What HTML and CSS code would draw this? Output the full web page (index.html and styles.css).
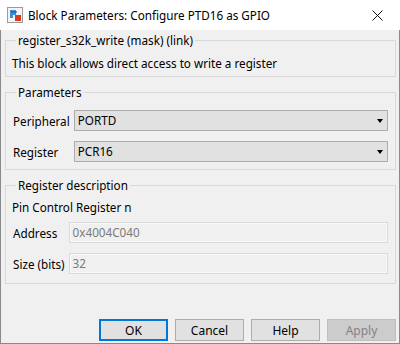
FILE: index.html
```html
<!DOCTYPE html>
<html lang="en">
<head>
    <meta charset="UTF-8">
    <title>Block Parameters: Configure PTD16 as GPIO</title>
    <link rel="stylesheet" href="styles.css">
</head>
<body>

    <div class="window">
        <div class="titlebar">
            <svg class="app-icon" width="16" height="16" viewBox="0 0 16 16">
                <rect x="0.5" y="0.5" width="15" height="15" fill="#f4f4f4" stroke="#9a9a9a"/>
                <path d="M3 3 L9 3 L9 8 L6 8 L6 11 L3 11 Z" fill="#3b8fd6"/>
                <path d="M4 5 L10 5" stroke="#1b5fa8" stroke-width="1.2"/>
                <rect x="8" y="8" width="6" height="6" fill="#d9391c"/>
            </svg>
            <span class="title">Block Parameters: Configure PTD16 as GPIO</span>
            <span class="close">
                <svg width="11" height="11" viewBox="0 0 11 11">
                    <path d="M0.5 0.5 L10.5 10.5 M10.5 0.5 L0.5 10.5" stroke="#111" stroke-width="1"/>
                </svg>
            </span>
        </div>

        <div class="content">
            <fieldset class="group intro">
                <legend>register_s32k_write (mask) (link)</legend>
                <div class="text">This block allows direct access to write a register</div>
            </fieldset>

            <fieldset class="group params">
                <legend>Parameters</legend>
                <div class="rows">
                    <label>Peripheral</label>
                    <div class="select">PORTD<span class="arrow"></span></div>
                    <label>Register</label>
                    <div class="select">PCR16<span class="arrow"></span></div>
                </div>
            </fieldset>

            <fieldset class="group desc">
                <legend>Register description</legend>
                <div class="text">Pin Control Register n</div>
                <div class="rows">
                    <label>Address</label>
                    <div class="field">0x4004C040</div>
                    <label>Size (bits)</label>
                    <div class="field">32</div>
                </div>
            </fieldset>

            <div class="buttons">
                <button type="button" class="default">OK</button>
                <button type="button">Cancel</button>
                <button type="button">Help</button>
                <button type="button" disabled>Apply</button>
            </div>
        </div>
    </div>

</body>
</html>
```

FILE: styles.css
```css
body {
    margin: 0;
    font-family: 'Noto Sans', 'Open Sans', sans-serif;
    font-size: 11.7px;
    color: #000;
    background: #fff;
}
.window {
    width: 400px;
    height: 344px;
    box-sizing: border-box;
    border: 1px solid #8a8a8a;
    border-top: none;
    background: #f0f0f0;
    display: flex;
    flex-direction: column;
}
.titlebar {
    height: 30px;
    background: #fff;
    margin: 0 -1px;
    display: flex;
    align-items: center;
    padding-left: 7px;
}
.app-icon {
    margin-right: 5px;
}
.title {
    flex: 1;
    line-height: 16px;
}
.close {
    width: 46px;
    height: 30px;
    display: flex;
    align-items: center;
    justify-content: center;
}
.content {
    flex: 1;
    padding: 2px 3px 0 4px;
    display: flex;
    flex-direction: column;
}
.group {
    margin: 0;
    padding: 0 7px 0 6px;
    border: 1px solid #d9d9d9;
    min-width: 0;
}
.group legend {
    padding: 0 2px;
    margin-left: 4px;
    line-height: 16px;
}
.text {
    line-height: 16px;
}
.intro {
    padding-top: 7px;
    padding-bottom: 5px;
}
.params {
    margin-top: 7px;
    padding-top: 10px;
    padding-bottom: 7px;
}
.desc {
    margin-top: 7px;
    padding-top: 6px;
    padding-bottom: 9px;
}
.rows {
    display: grid;
    grid-template-columns: auto 1fr;
    column-gap: 4px;
    row-gap: 10px;
    align-items: center;
}
.desc .rows {
    margin-top: 7px;
}
.rows label {
    padding-left: 1px;
}
.select, .field {
    height: 21px;
    box-sizing: border-box;
    line-height: 19px;
    padding-left: 3px;
    position: relative;
}
.select {
    background: #e1e1e1;
    border: 1px solid #adadad;
}
.arrow {
    position: absolute;
    right: 4px;
    top: 8px;
    border-left: 3.5px solid transparent;
    border-right: 3.5px solid transparent;
    border-top: 4px solid #000;
}
.field {
    border: 1px solid #d9d9d9;
    box-shadow: inset 0 0 0 1px #fafafa;
    color: #7a7a7a;
}
.buttons {
    margin-top: auto;
    margin-bottom: 2px;
    display: flex;
    justify-content: flex-end;
    gap: 7px;
    padding-right: 0;
}
.buttons button {
    width: 69px;
    height: 22px;
    box-sizing: border-box;
    font-family: inherit;
    font-size: 12px;
    background: #e1e1e1;
    border: 1px solid #adadad;
    color: #000;
    padding: 0;
}
.buttons .default {
    border: 2px solid #0078d7;
}
.buttons button:disabled {
    background: #cccccc;
    border-color: #bfbfbf;
    color: #838383;
}
```
